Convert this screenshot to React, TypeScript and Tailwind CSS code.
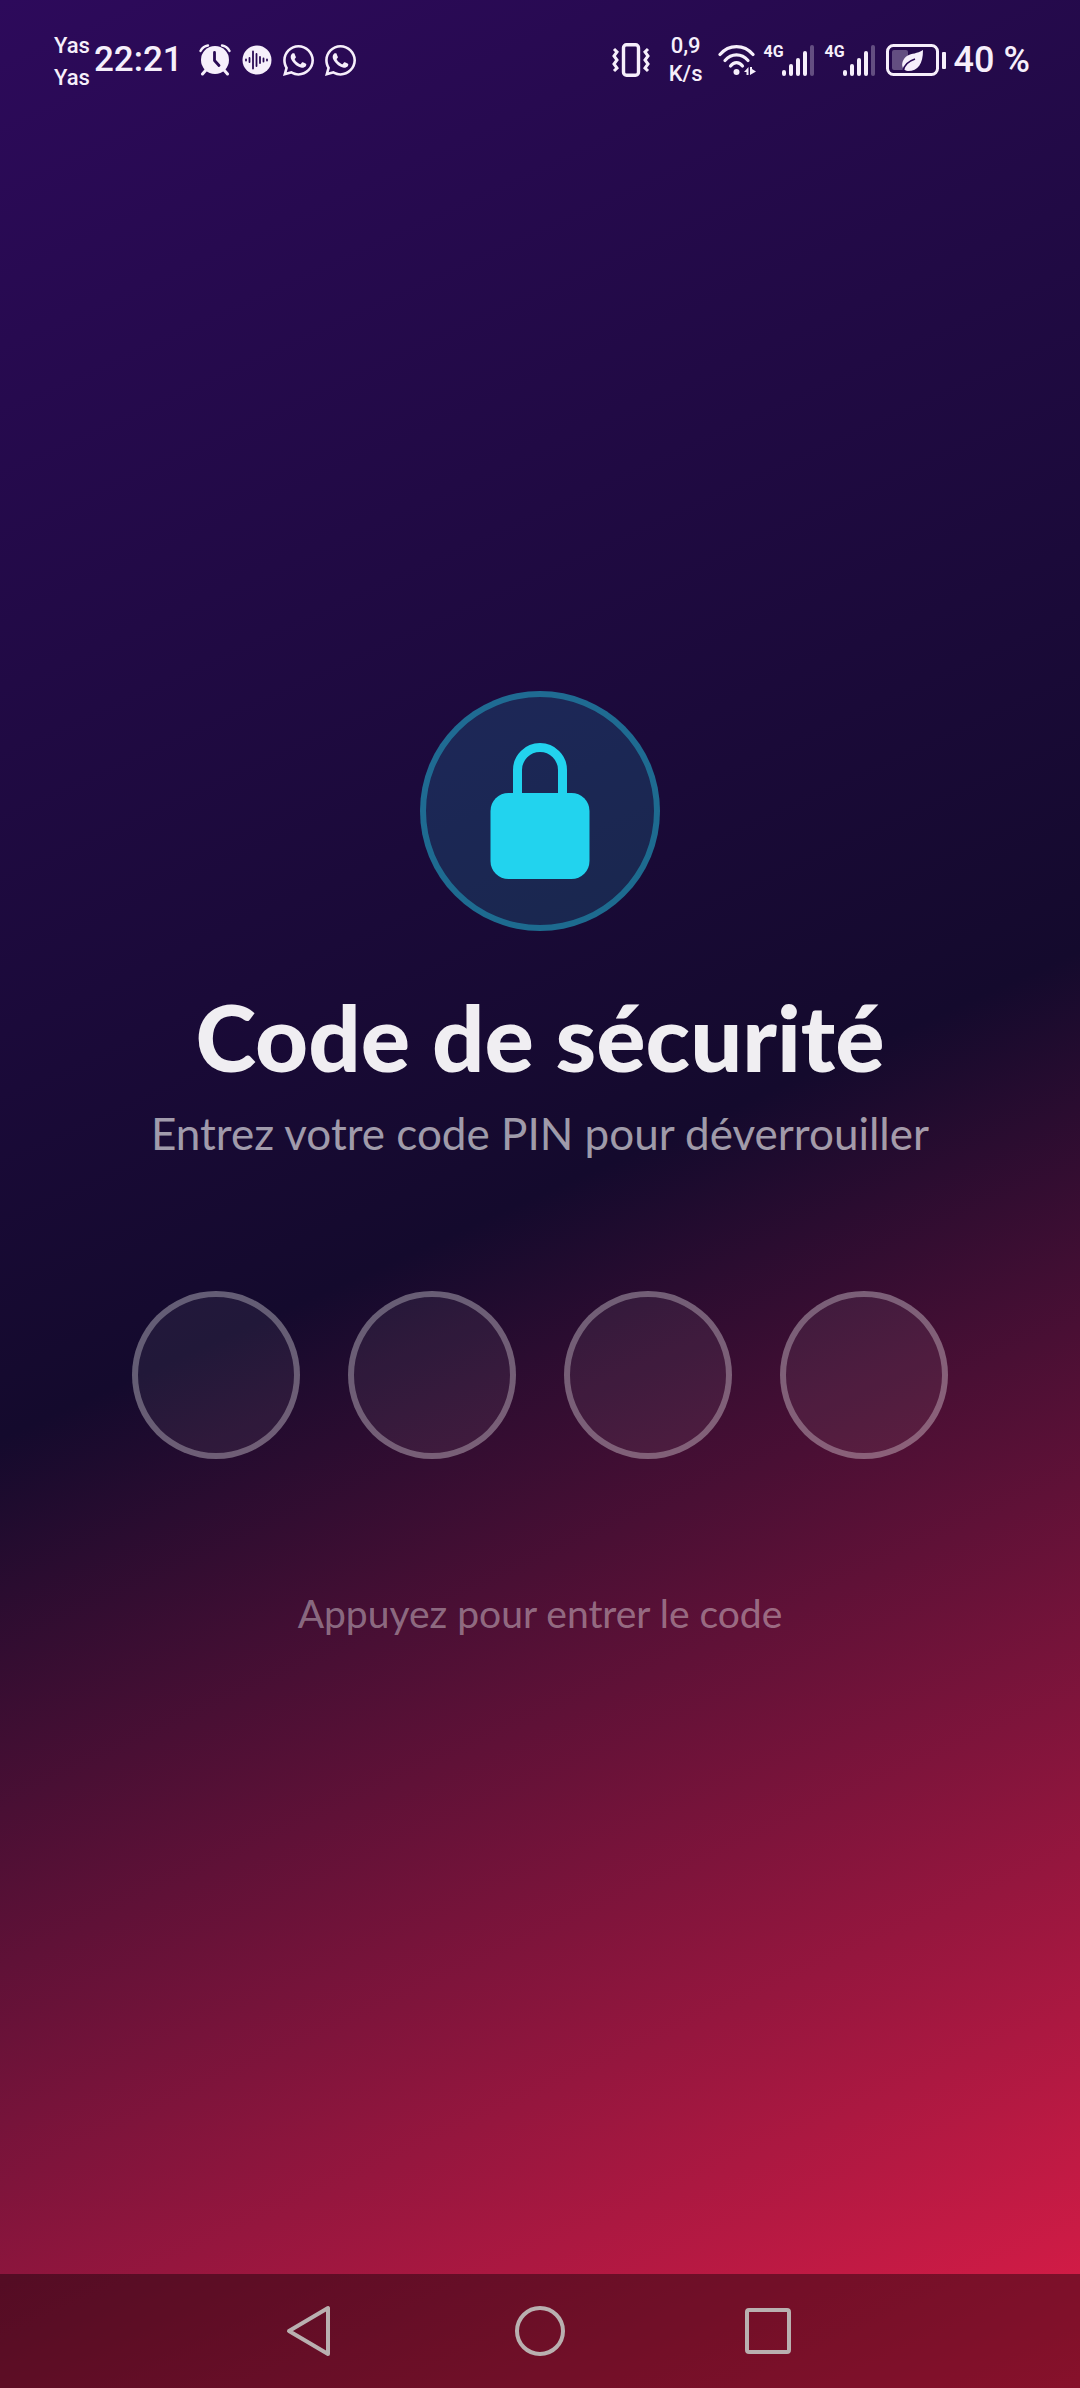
import { FaWhatsapp } from "react-icons/fa";

const PIN_LENGTH = 4;

function AlarmIcon() {
  return (
    <svg viewBox="0 0 32 32" className="h-8 w-8" fill="none" aria-hidden="true">
      <circle cx="16" cy="16" r="14" fill="currentColor" />
      <path d="M1.5 7 C3 4 5 2 9 1.5 M30.5 7 C29 4 27 2 23 1.5" stroke="currentColor" strokeWidth="2.4" strokeLinecap="round" />
      <path d="M7 26 L3.5 30 M25 26 L28.5 30" stroke="currentColor" strokeWidth="3" strokeLinecap="round" />
      <path d="M15.5 8.5 V16.5 L20 21.5" stroke="#2a0a55" strokeWidth="2.8" strokeLinecap="round" strokeLinejoin="round" />
    </svg>
  );
}

function VoiceIcon() {
  return (
    <svg viewBox="0 0 30 30" className="h-[30px] w-[30px]" fill="none" aria-hidden="true">
      <circle cx="15" cy="15" r="14.5" fill="currentColor" />
      <path
        d="M4 14.5 v1 M7.5 13 v4 M11 6.5 v17 M14.5 9 v12 M18 12 v6 M21.5 13.5 v3 M25 14.5 v1"
        stroke="#2a0a55"
        strokeWidth="1.8"
        strokeLinecap="round"
      />
    </svg>
  );
}

function WhatsappIcon() {
  return <FaWhatsapp viewBox="0 32 448 448" className="h-[31px] w-[31px]" aria-hidden="true" />;
}

function VibrateIcon() {
  return (
    <svg viewBox="0 0 38 34" className="h-[34px] w-[38px]" fill="none" stroke="currentColor" strokeWidth="3.4" aria-hidden="true">
      <rect x="11.5" y="1.8" width="15" height="30.4" rx="3" />
      <path
        d="M2 6 L5 9 L2 13 L5 17 L2 21 L5 25 L2 28 M36 6 L33 9 L36 13 L33 17 L36 21 L33 25 L36 28"
        strokeWidth="3"
      />
    </svg>
  );
}

function WifiIcon() {
  return (
    <svg viewBox="0 0 38 34" className="h-[34px] w-[38px]" fill="none" stroke="currentColor" strokeWidth="3.2" strokeLinecap="round" aria-hidden="true">
      <path d="M2 11.5 C11 1 26 1 35 11.5" />
      <path d="M7 17.5 C13.5 10 23.5 10 30 17.5" />
      <path d="M12.5 23 C16 18.5 21 18.5 24.5 23" />
      <circle cx="18.5" cy="29" r="3" fill="currentColor" stroke="none" />
      <path d="M26 29 L30.5 24 V32 H28.5 V29 Z M32 24 H34 V26 L38 28.5 L32 32 Z" fill="currentColor" stroke="none" />
    </svg>
  );
}

function Signal() {
  return (
    <div className="flex h-8 items-start">
      <span className="w-[18px] text-[16px] leading-4 font-bold">4G</span>
      <svg viewBox="0 0 32 32" className="h-8 w-8 shrink-0" fill="currentColor" aria-hidden="true">
        <rect x="0" y="26" width="4" height="6" rx="2" />
        <rect x="7" y="20" width="4" height="12" rx="2" />
        <rect x="14" y="14" width="4" height="18" rx="2" />
        <rect x="21" y="7" width="4" height="25" rx="2" />
        <rect x="28" y="1" width="4" height="31" rx="2" opacity="0.3" />
      </svg>
    </div>
  );
}

function BatteryIcon() {
  return (
    <svg viewBox="0 0 60 32" className="h-8 w-[60px]" fill="none" aria-hidden="true">
      <rect x="1.5" y="1.5" width="50" height="29" rx="6" stroke="currentColor" strokeWidth="3" />
      <rect x="6" y="6" width="16" height="20" rx="2" fill="currentColor" opacity="0.3" />
      <path d="M37 6 C37 20 32 27 22 27 C14 26 15 16 21 12 C26 9 31 10 37 6 Z" fill="currentColor" />
      <path d="M17 27 C18 21 23 17 29 15" stroke="#2a0a55" strokeWidth="1.6" />
      <rect x="56" y="8" width="4" height="17" rx="1" fill="currentColor" />
    </svg>
  );
}

function StatusBar() {
  return (
    <header className="flex h-[120px] items-center justify-between pr-[50px] pl-[54px] font-['Roboto',sans-serif] text-[#f6effb]">
      <div className="flex items-center">
        <div className="pt-1 text-[22px] leading-8 font-medium">
          <div>Yas</div>
          <div>Yas</div>
        </div>
        <time className="ml-1 text-[35px] leading-10 font-medium">22:21</time>
        <div className="ml-4 flex items-center gap-[11px]">
          <AlarmIcon />
          <VoiceIcon />
          <WhatsappIcon />
          <WhatsappIcon />
        </div>
      </div>
      <div className="flex items-center">
        <VibrateIcon />
        <div className="ml-4 w-10 text-center text-[22px] leading-7 font-medium">
          <div>0,9</div>
          <div>K/s</div>
        </div>
        <div className="mr-2 ml-3">
          <WifiIcon />
        </div>
        <div className="flex items-center gap-[11px]">
          <Signal />
          <Signal />
          <BatteryIcon />
        </div>
        <span className="ml-2 text-[36px] leading-10 font-medium">40 %</span>
      </div>
    </header>
  );
}

function LockBadge() {
  return (
    <div className="grid h-60 w-60 place-items-center rounded-full border-6 border-[#22d3ee]/40 bg-[#22d3ee]/15 text-[#22d3ee]">
      <svg viewBox="0 0 100 136" className="h-[136px] w-[100px]" fill="none" aria-hidden="true">
        <path d="M27.5 54 V27 A22.5 22.5 0 0 1 72.5 27 V54" stroke="currentColor" strokeWidth="9" />
        <rect x="0.5" y="50" width="99" height="86" rx="18" fill="currentColor" />
      </svg>
    </div>
  );
}

function PinInput() {
  return (
    <button type="button" aria-label="Code PIN" className="mt-32 flex gap-12">
      {Array.from({ length: PIN_LENGTH }, (_, index) => (
        <span key={index} className="h-[168px] w-[168px] rounded-full border-6 border-white/30 bg-white/6" />
      ))}
    </button>
  );
}

function NavigationBar() {
  return (
    <nav className="flex h-[114px] items-center justify-center gap-[177px] bg-black/40 text-[#b9b0b0]">
      <button type="button" aria-label="Retour">
        <svg viewBox="0 0 52 52" className="h-[52px] w-[52px]" fill="none" stroke="currentColor" strokeWidth="4" strokeLinejoin="round" aria-hidden="true">
          <path d="M43 3 V49 L4 26 Z" />
        </svg>
      </button>
      <button type="button" aria-label="Accueil">
        <svg viewBox="0 0 52 52" className="h-[52px] w-[52px]" fill="none" stroke="currentColor" strokeWidth="4" aria-hidden="true">
          <circle cx="26" cy="26" r="23" />
        </svg>
      </button>
      <button type="button" aria-label="Applications récentes">
        <svg viewBox="0 0 52 52" className="h-[52px] w-[52px]" fill="none" stroke="currentColor" strokeWidth="4" strokeLinejoin="round" aria-hidden="true">
          <rect x="4" y="5" width="42" height="42" rx="2" />
        </svg>
      </button>
    </nav>
  );
}

export default function App() {
  return (
    <div className="flex min-h-screen flex-col bg-[linear-gradient(155.7deg,#2d0a5b_0%,#140a2d_50%,#e11d48_100%)]">
      <StatusBar />
      <main className="flex flex-1 flex-col items-center justify-center pb-16 font-['Lato',sans-serif]">
        <LockBadge />
        <h1 className="mt-14 text-[92px] leading-[100px] font-black text-[#f0eef2]">Code de sécurité</h1>
        <p className="mt-4 text-[44px] leading-[60px] text-white/60">Entrez votre code PIN pour déverrouiller</p>
        <PinInput />
        <p className="mt-32 text-[39px] leading-[52px] text-white/40">Appuyez pour entrer le code</p>
      </main>
      <NavigationBar />
    </div>
  );
}
